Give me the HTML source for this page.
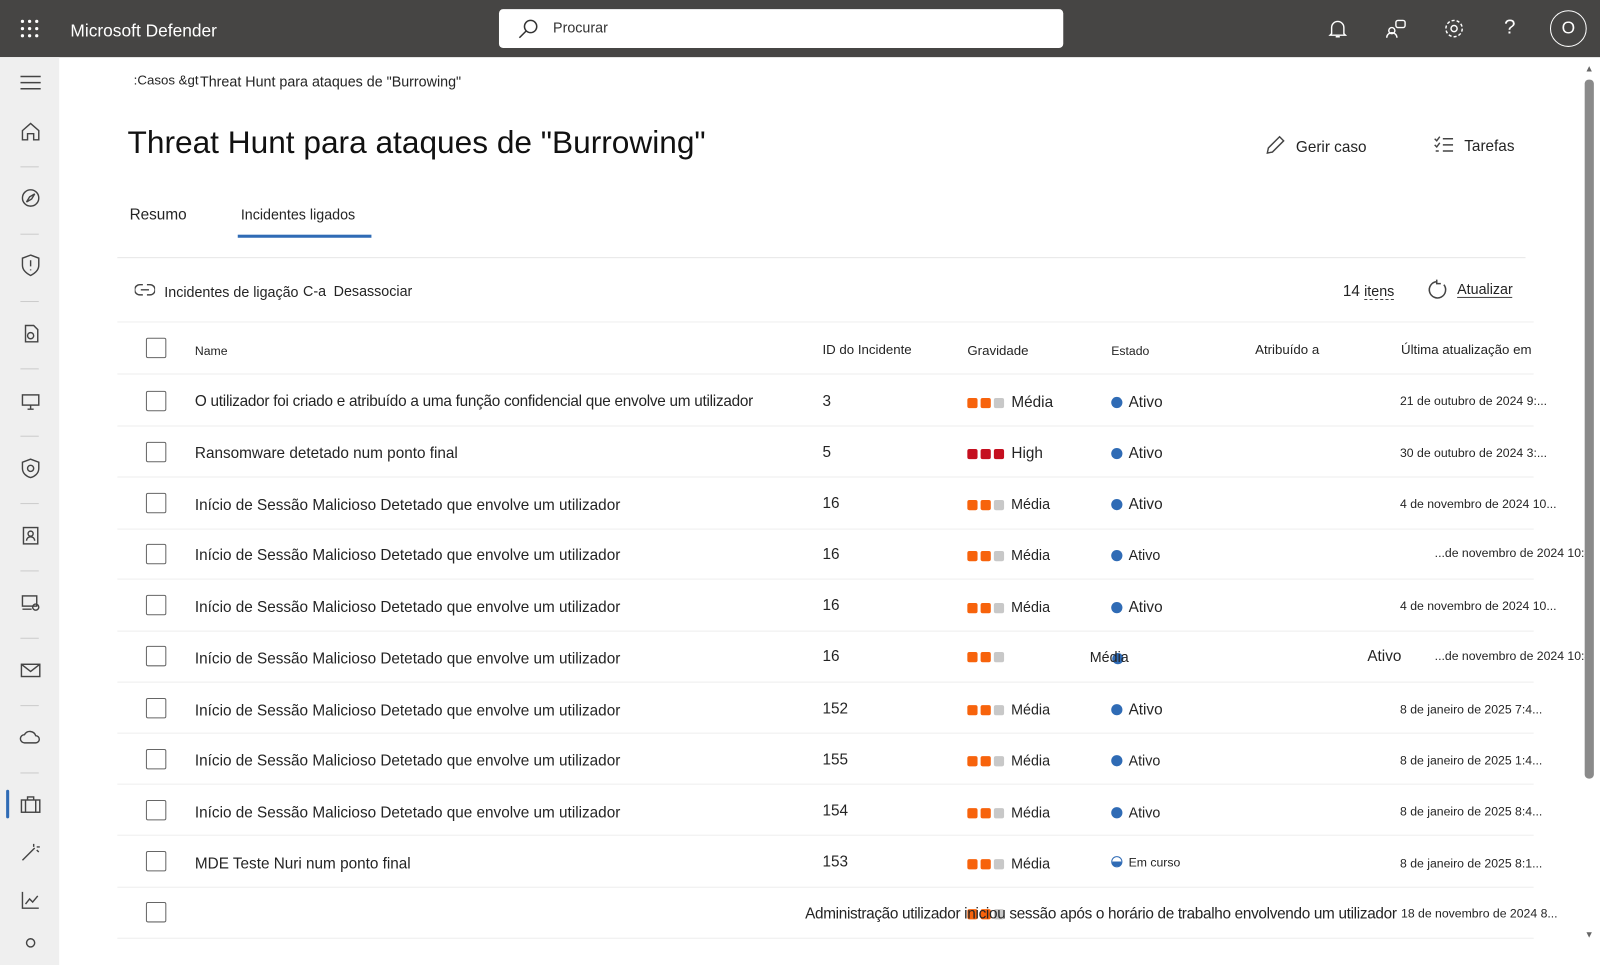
<!DOCTYPE html>
<html><head><meta charset="utf-8"><style>
*{margin:0;padding:0;box-sizing:border-box}
body{width:1600px;height:946px;overflow:hidden;background:#fff;font-family:"Liberation Sans",sans-serif;color:#242424;position:relative}
#w{position:absolute;left:0;top:0;width:1568px;height:927px;transform:scale(1.0204);transform-origin:0 0}
.a{position:absolute;white-space:nowrap}
.top{left:0;top:0;width:1600px;height:56px;background:#464544}
.side{left:0;top:56px;width:58px;height:890px;background:#efefef}
.sep{position:absolute;left:20px;width:18px;height:1px;background:#ccc}
.row{position:absolute;left:115px;width:1388px;height:1px;background:#eee}
.cb{position:absolute;left:143px;width:20px;height:20px;border:1px solid #666;border-radius:2px;background:#fff}
.sq{display:inline-block;width:10px;height:10px;border-radius:2px;margin-right:3px;vertical-align:middle}
.o{background:#f7630c}.g{background:#c8c8c8}.r{background:#c50f1f}
.dot{display:inline-block;width:11px;height:11px;border-radius:50%;background:#2f6bb5;margin-right:6px;vertical-align:-1px}
.t{font-size:15px}
</style></head><body><div id="w">
<div class="a top"></div>
<svg class="a" style="left:20px;top:19px" width="18" height="18"><g fill="#fff"><circle cx="2" cy="2" r="1.6"/><circle cx="9" cy="2" r="1.6"/><circle cx="16" cy="2" r="1.6"/><circle cx="2" cy="9" r="1.6"/><circle cx="9" cy="9" r="1.6"/><circle cx="16" cy="9" r="1.6"/><circle cx="2" cy="16" r="1.6"/><circle cx="9" cy="16" r="1.6"/><circle cx="16" cy="16" r="1.6"/></g></svg>
<div class="a" style="left:69px;top:21px;color:#fff;font-size:17px">Microsoft Defender</div>
<div class="a" style="left:489px;top:9px;width:553px;height:38px;background:#fff;border-radius:4px"></div>
<svg class="a" style="left:508px;top:18px" width="20" height="20" fill="none" stroke="#333" stroke-width="1.5"><circle cx="12" cy="8" r="6"/><path d="M8 12L1 19"/></svg>
<div class="a" style="left:542px;top:19px;font-size:14px;color:#333">Procurar</div>
<svg class="a" style="left:1301px;top:18px" width="20" height="20" fill="none" stroke="#fff" stroke-width="1.4"><path d="M4 15V9a6 6 0 0112 0v6l1.5 1.5h-15zM8 18h4"/></svg>
<svg class="a" style="left:1357px;top:18px" width="22" height="20" fill="none" stroke="#fff" stroke-width="1.4"><circle cx="7" cy="12" r="3"/><path d="M2 19a5 5 0 0110 0"/><rect x="11" y="2" width="9" height="7" rx="2"/></svg>
<svg class="a" style="left:1414px;top:17px" width="22" height="22" fill="none" stroke="#fff" stroke-width="1.4"><circle cx="11" cy="11" r="3"/><circle cx="11" cy="11" r="8" stroke-dasharray="3 2"/></svg>
<div class="a" style="left:1474px;top:16px;color:#fff;font-size:20px">?</div>
<div class="a" style="left:1519px;top:10px;width:36px;height:36px;border:1px solid #fff;border-radius:50%;color:#fff;font-size:17px;text-align:center;line-height:34px">O</div>

<div class="a side"></div>
<svg class="a" style="left:20px;top:73px" width="20" height="16" stroke="#444" stroke-width="1.5"><path d="M0 2h20M0 8h20M0 14h20"/></svg>
<svg class="a" style="left:20px;top:119px" width="20" height="20" fill="none" stroke="#444" stroke-width="1.4"><path d="M2 9l8-7 8 7v9h-5v-6H7v6H2z"/></svg>
<div class="sep" style="top:163px"></div>
<svg class="a" style="left:20px;top:184px" width="20" height="20" fill="none" stroke="#444" stroke-width="1.4"><circle cx="10" cy="10" r="8"/><path d="M6 14l3-5 5-3-3 5z"/></svg>
<div class="sep" style="top:229px"></div>
<svg class="a" style="left:20px;top:249px" width="20" height="22" fill="none" stroke="#444" stroke-width="1.4"><path d="M10 1l8 3v7c0 5-4 8-8 10-4-2-8-5-8-10V4zM10 6v6M10 15v1"/></svg>
<div class="sep" style="top:295px"></div>
<svg class="a" style="left:21px;top:317px" width="20" height="20" fill="none" stroke="#444" stroke-width="1.4"><path d="M4 2h8l4 4v12H4z"/><circle cx="9" cy="12" r="3"/></svg>
<div class="sep" style="top:361px"></div>
<svg class="a" style="left:20px;top:384px" width="20" height="20" fill="none" stroke="#444" stroke-width="1.4"><rect x="2" y="3" width="16" height="10"/><path d="M7 17h6M10 13v4"/></svg>
<div class="sep" style="top:427px"></div>
<svg class="a" style="left:20px;top:449px" width="20" height="20" fill="none" stroke="#444" stroke-width="1.4"><path d="M10 1l8 3v6c0 5-4 8-8 9-4-1-8-4-8-9V4z"/><circle cx="10" cy="10" r="3"/></svg>
<div class="sep" style="top:493px"></div>
<svg class="a" style="left:20px;top:515px" width="20" height="20" fill="none" stroke="#444" stroke-width="1.4"><rect x="3" y="2" width="14" height="16"/><circle cx="10" cy="8" r="2.5"/><path d="M6 15a4 4 0 018 0"/></svg>
<div class="sep" style="top:559px"></div>
<svg class="a" style="left:20px;top:581px" width="20" height="20" fill="none" stroke="#444" stroke-width="1.4"><rect x="2" y="3" width="14" height="10"/><path d="M2 16h9"/><circle cx="15" cy="14" r="3"/></svg>
<div class="sep" style="top:625px"></div>
<svg class="a" style="left:20px;top:647px" width="20" height="20" fill="none" stroke="#444" stroke-width="1.4"><rect x="1" y="4" width="18" height="12"/><path d="M1 4l9 7 9-7"/></svg>
<div class="sep" style="top:691px"></div>
<svg class="a" style="left:19px;top:713px" width="22" height="20" fill="none" stroke="#444" stroke-width="1.4"><path d="M5 15a4 4 0 010-8 6 6 0 0111 1 3.5 3.5 0 010 7z"/></svg>
<div class="sep" style="top:757px"></div>
<div class="a" style="left:6px;top:774px;width:3px;height:28px;background:#2f6bb5;border-radius:2px"></div>
<svg class="a" style="left:20px;top:779px" width="20" height="20" fill="none" stroke="#444" stroke-width="1.4"><rect x="1" y="5" width="18" height="12"/><path d="M7 5V2h6v3M5 5v12M15 5v12"/></svg>
<svg class="a" style="left:20px;top:825px" width="20" height="20" fill="none" stroke="#444" stroke-width="1.4"><path d="M2 18L14 6M13 2v3M16 5h3M16 8l2 2"/></svg>
<svg class="a" style="left:20px;top:872px" width="20" height="20" fill="none" stroke="#444" stroke-width="1.4"><path d="M2 2v16h16M5 14l4-5 3 3 5-6"/></svg>
<svg class="a" style="left:21px;top:918px" width="20" height="20" fill="none" stroke="#444" stroke-width="1.4"><circle cx="9" cy="6" r="4"/></svg>

<div class="a" style="left:131px;top:71px;font-size:13px">:Casos &amp;gt</div>
<div class="a" style="left:196px;top:72px;font-size:14px">Threat Hunt para ataques de "Burrowing"</div>
<div class="a" style="left:125px;top:122px;font-size:31px;color:#111">Threat Hunt para ataques de "Burrowing"</div>
<svg class="a" style="left:1240px;top:132px" width="20" height="20" fill="none" stroke="#444" stroke-width="1.4"><path d="M2 18l1-5L14 2l4 4L7 17z"/></svg>
<div class="a" style="left:1270px;top:136px;font-size:15px">Gerir caso</div>
<svg class="a" style="left:1405px;top:133px" width="20" height="18" fill="none" stroke="#444" stroke-width="1.4"><path d="M1 3l2 2 3-4M9 3h10M1 9l2 2 3-4M9 9h10M9 15h10M2 15h3"/></svg>
<div class="a" style="left:1435px;top:135px;font-size:15px">Tarefas</div>
<div class="a" style="left:127px;top:202px;font-size:15px">Resumo</div>
<div class="a" style="left:236px;top:202px;font-size:14px">Incidentes ligados</div>
<div class="a" style="left:233px;top:230px;width:131px;height:3px;background:#2f6bb5"></div>
<div class="a" style="left:115px;top:252px;width:1380px;height:1px;background:#e6e6e6"></div>
<svg class="a" style="left:132px;top:278px" width="20" height="12" fill="none" stroke="#444" stroke-width="1.4"><path d="M8 1H5a5 5 0 000 10h3M12 1h3a5 5 0 010 10h-3M6 6h8"/></svg>
<div class="a" style="left:161px;top:278px;font-size:14px">Incidentes de ligação</div>
<div class="a" style="left:297px;top:277px;font-size:14px">C-a</div>
<div class="a" style="left:327px;top:277px;font-size:14px">Desassociar</div>
<div class="a" style="left:1316px;top:277px;font-size:15px">14 <span style="font-size:14px;border-bottom:1px dashed #444">itens</span></div>
<svg class="a" style="left:1398px;top:273px" width="22" height="22" fill="none" stroke="#444" stroke-width="1.5"><path d="M17 6a8 8 0 11-7-3M10 1v4h4"/></svg>
<div class="a" style="left:1428px;top:275px;font-size:14px;border-bottom:1px solid #444">Atualizar</div>
<div class="a" style="left:115px;top:315px;width:1388px;height:1px;background:#eee"></div>

<div class="cb" style="top:331px"></div>
<div class="a" style="left:191px;top:337px;font-size:12px">Name</div>
<div class="a" style="left:806px;top:335px;font-size:13px">ID do Incidente</div>
<div class="a" style="left:948px;top:336px;font-size:13px">Gravidade</div>
<div class="a" style="left:1089px;top:337px;font-size:12px">Estado</div>
<div class="a" style="left:1230px;top:335px;font-size:13px">Atribuído a</div>
<div class="a" style="left:1373px;top:335px;font-size:13px">Última atualização em</div>
<div class="row" style="top:366px"></div>

<div class="cb" style="top:383px"></div><div class="a t" style="left:191px;top:385px;letter-spacing:-0.25px">O utilizador foi criado e atribuído a uma função confidencial que envolve um utilizador</div><div class="a t" style="left:806px;top:385px">3</div><div class="a t" style="left:948px;top:386px"><span class="sq o"></span><span class="sq o"></span><span class="sq g"></span> Média</div><div class="a t" style="left:1089px;top:386px"><span class="dot"></span>Ativo</div><div class="a" style="left:1372px;top:386px;font-size:12px">21 de outubro de 2024 9:...</div>
<div class="row" style="top:417px"></div>
<div class="cb" style="top:433px"></div><div class="a t" style="left:191px;top:436px">Ransomware detetado num ponto final</div><div class="a t" style="left:806px;top:435px">5</div><div class="a t" style="left:948px;top:436px"><span class="sq r"></span><span class="sq r"></span><span class="sq r"></span> High</div><div class="a t" style="left:1089px;top:436px"><span class="dot"></span>Ativo</div><div class="a" style="left:1372px;top:437px;font-size:12px">30 de outubro de 2024 3:...</div>
<div class="row" style="top:467px"></div>
<div class="cb" style="top:483px"></div><div class="a t" style="left:191px;top:487px">Início de Sessão Malicioso Detetado que envolve um utilizador</div><div class="a t" style="left:806px;top:485px">16</div><div class="a t" style="left:948px;top:486px;font-size:14px"><span class="sq o"></span><span class="sq o"></span><span class="sq g"></span> Média</div><div class="a t" style="left:1089px;top:486px"><span class="dot"></span>Ativo</div><div class="a" style="left:1372px;top:487px;font-size:12px">4 de novembro de 2024 10...</div>
<div class="row" style="top:518px"></div>
<div class="cb" style="top:533px"></div><div class="a t" style="left:191px;top:536px">Início de Sessão Malicioso Detetado que envolve um utilizador</div><div class="a t" style="left:806px;top:535px">16</div><div class="a" style="left:948px;top:536px;font-size:14px"><span class="sq o"></span><span class="sq o"></span><span class="sq g"></span> Média</div><div class="a" style="left:1089px;top:536px;font-size:14px"><span class="dot"></span>Ativo</div><div class="a" style="left:1406px;top:535px;font-size:12px">...de novembro de 2024 10:4</div>
<div class="row" style="top:567px"></div>
<div class="cb" style="top:583px"></div><div class="a t" style="left:191px;top:587px">Início de Sessão Malicioso Detetado que envolve um utilizador</div><div class="a t" style="left:806px;top:585px">16</div><div class="a" style="left:948px;top:587px;font-size:14px"><span class="sq o"></span><span class="sq o"></span><span class="sq g"></span> Média</div><div class="a t" style="left:1089px;top:587px"><span class="dot"></span>Ativo</div><div class="a" style="left:1372px;top:587px;font-size:12px">4 de novembro de 2024 10...</div>
<div class="row" style="top:618px"></div>
<div class="cb" style="top:633px"></div><div class="a t" style="left:191px;top:637px">Início de Sessão Malicioso Detetado que envolve um utilizador</div><div class="a t" style="left:806px;top:635px">16</div><div class="a" style="left:948px;top:635px"><span class="sq o"></span><span class="sq o"></span><span class="sq g"></span></div><div class="a" style="left:1090px;top:637px"><span class="dot"></span></div><div class="a" style="left:1068px;top:636px;font-size:14px">Média</div><div class="a t" style="left:1340px;top:635px">Ativo</div><div class="a" style="left:1406px;top:636px;font-size:12px">...de novembro de 2024 10:4</div>
<div class="row" style="top:668px"></div>
<div class="cb" style="top:684px"></div><div class="a t" style="left:191px;top:688px">Início de Sessão Malicioso Detetado que envolve um utilizador</div><div class="a t" style="left:806px;top:686px">152</div><div class="a" style="left:948px;top:687px;font-size:14px"><span class="sq o"></span><span class="sq o"></span><span class="sq g"></span> Média</div><div class="a t" style="left:1089px;top:687px"><span class="dot"></span>Ativo</div><div class="a" style="left:1372px;top:688px;font-size:12px">8 de janeiro de 2025 7:4...</div>
<div class="row" style="top:718px"></div>
<div class="cb" style="top:734px"></div><div class="a t" style="left:191px;top:737px">Início de Sessão Malicioso Detetado que envolve um utilizador</div><div class="a t" style="left:806px;top:736px">155</div><div class="a" style="left:948px;top:737px;font-size:14px"><span class="sq o"></span><span class="sq o"></span><span class="sq g"></span> Média</div><div class="a" style="left:1089px;top:737px;font-size:14px"><span class="dot"></span>Ativo</div><div class="a" style="left:1372px;top:738px;font-size:12px">8 de janeiro de 2025 1:4...</div>
<div class="row" style="top:768px"></div>
<div class="cb" style="top:784px"></div><div class="a t" style="left:191px;top:788px">Início de Sessão Malicioso Detetado que envolve um utilizador</div><div class="a t" style="left:806px;top:786px">154</div><div class="a" style="left:948px;top:788px;font-size:14px"><span class="sq o"></span><span class="sq o"></span><span class="sq g"></span> Média</div><div class="a" style="left:1089px;top:788px;font-size:14px"><span class="dot"></span>Ativo</div><div class="a" style="left:1372px;top:788px;font-size:12px">8 de janeiro de 2025 8:4...</div>
<div class="row" style="top:818px"></div>
<div class="cb" style="top:834px"></div><div class="a t" style="left:191px;top:838px">MDE Teste Nuri num ponto final</div><div class="a t" style="left:806px;top:836px">153</div><div class="a" style="left:948px;top:838px;font-size:14px"><span class="sq o"></span><span class="sq o"></span><span class="sq g"></span> Média</div><div class="a" style="left:1089px;top:838px;font-size:12px"><span class="dot" style="background:linear-gradient(#fff 50%,#2f6bb5 50%);border:1px solid #2f6bb5"></span>Em curso</div><div class="a" style="left:1372px;top:839px;font-size:12px">8 de janeiro de 2025 8:1...</div>
<div class="row" style="top:869px"></div>
<div class="cb" style="top:884px"></div><div class="a" style="left:948px;top:887px"><span class="sq o"></span><span class="sq o"></span><span class="sq g"></span></div><div class="a t" style="left:789px;top:887px;letter-spacing:-0.3px">Administração utilizador iniciou sessão após o horário de trabalho envolvendo um utilizador</div><div class="a" style="left:1373px;top:888px;font-size:12px">18 de novembro de 2024 8...</div>
<div class="row" style="top:919px"></div>

<div class="a" style="left:1553px;top:78px;width:9px;height:685px;background:#8a8a8a;border-radius:4px"></div>
<div class="a" style="left:1553px;top:62px;font-size:9px;color:#666">▲</div>
<div class="a" style="left:1553px;top:911px;font-size:9px;color:#666">▼</div>
</div></body></html>
